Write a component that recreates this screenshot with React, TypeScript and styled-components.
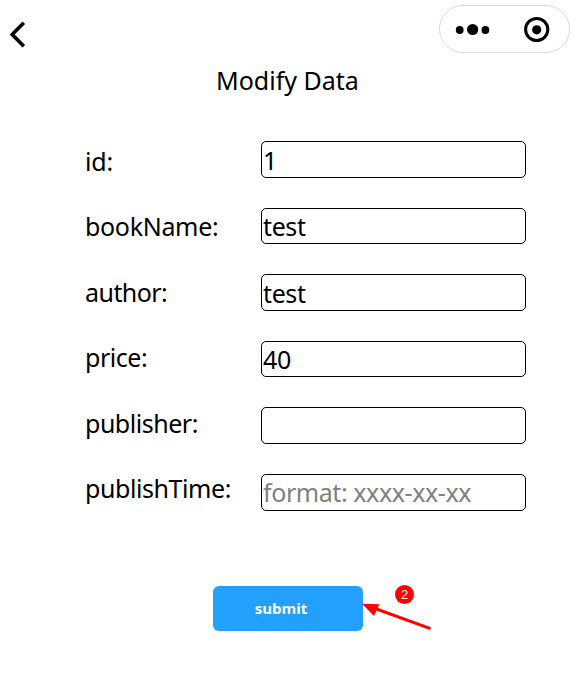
import React from "react";
import styled, { createGlobalStyle } from "styled-components";

const GlobalStyle = createGlobalStyle`
  *, *::before, *::after { box-sizing: border-box; }
  body {
    margin: 0;
    background: #fff;
    color: #000;
    font-family: "Segoe UI", "Noto Sans", sans-serif;
    font-size: 25px;
  }
`;

const Page = styled.main`
  width: 574px;
  height: 683px;
  overflow: hidden;
`;

const TopBar = styled.header`
  display: flex;
  justify-content: space-between;
  height: 58px;
  padding: 5px 4px 0 8px;
`;

const BackButton = styled.button`
  width: 20px;
  height: 30px;
  margin-top: 15px;
  padding: 0;
  border: 0;
  background: none;
  svg { display: block; }
`;

const Capsule = styled.div`
  width: 131px;
  height: 48px;
  border: 1px solid #dcdcdc;
  border-radius: 24px;
  svg { display: block; }
`;

const Title = styled.h1`
  margin: 0;
  height: 83.27px;
  padding-left: 216px;
  font-size: 25px;
  font-weight: 400;
  line-height: 45px;
  white-space: nowrap;
`;

const Form = styled.form`
  display: grid;
  grid-template-columns: 176px 265px;
  align-items: start;
  padding-left: 85px;
`;

const Labels = styled.div`
  display: flex;
  flex-direction: column;
  gap: 29.4px;
  margin-top: -0.27px;
`;

const Label = styled.label<{ $tracking: number }>`
  height: 36px;
  line-height: 40px;
  white-space: nowrap;
  letter-spacing: ${(p) => p.$tracking}px;
`;

const Fields = styled.div`
  display: flex;
  flex-direction: column;
  gap: 29.95px;
`;

const Input = styled.input<{ $tracking: number }>`
  width: 265px;
  height: 36.6px;
  padding: 0 0 0 1px;
  border: 1px solid #000;
  border-radius: 5px;
  background: #fff;
  color: #000;
  font: inherit;
  letter-spacing: ${(p) => p.$tracking}px;
  outline: none;
  &::placeholder { color: #808080; opacity: 1; }
`;

const Actions = styled.div`
  display: flex;
  grid-column: 1 / -1;
  margin: 75.3px 0 0 128px;
`;

const Submit = styled.button`
  width: 150px;
  height: 45px;
  padding: 0 14px 0 0;
  border: 0;
  border-radius: 6px;
  background: #22a0fc;
  color: #fff;
  font-family: "Segoe UI", "Open Sans", sans-serif;
  font-size: 15px;
  font-weight: 700;
  line-height: 45px;
`;

const Callout = styled.div`
  position: relative;
  width: 70px;
  height: 45px;
  svg { display: block; overflow: visible; }
`;

const Step = styled.span`
  position: absolute;
  left: 32px;
  top: -1px;
  width: 19px;
  height: 19px;
  border-radius: 50%;
  background: #f00;
  color: #fff;
  font: 13px/19px "Liberation Sans", sans-serif;
  text-align: center;
`;

const fields = [
  { name: "id", value: "1", tracking: -0.2, valueTracking: 0 },
  { name: "bookName", value: "test", tracking: -0.32, valueTracking: -0.4 },
  { name: "author", value: "test", tracking: -0.55, valueTracking: -0.4 },
  { name: "price", value: "40", tracking: -0.45, valueTracking: -0.2 },
  { name: "publisher", value: "", tracking: -0.48, valueTracking: 0 },
  { name: "publishTime", value: "", placeholder: "format: xxxx-xx-xx", tracking: -0.42, valueTracking: -0.42 },
];

export default function App() {
  return (
    <Page>
      <GlobalStyle />
      <TopBar>
        <BackButton aria-label="Back">
          <svg width="20" height="30" viewBox="0 0 20 30" fill="none" stroke="#000" strokeWidth="3.6">
            <path d="M15.8 2.8 4.2 14.5l11.6 11.7" />
          </svg>
        </BackButton>
        <Capsule>
          <svg width="129" height="46" viewBox="0 0 129 46">
            <circle cx="19.7" cy="24" r="3.9" />
            <circle cx="32.6" cy="23.5" r="5.6" />
            <circle cx="45.4" cy="24" r="3.9" />
            <circle cx="96.7" cy="23.5" r="11.1" fill="none" stroke="#000" strokeWidth="3" />
            <circle cx="96.7" cy="23.8" r="4.6" />
          </svg>
        </Capsule>
      </TopBar>
      <Title>Modify Data</Title>
      <Form onSubmit={(e) => e.preventDefault()}>
        <Labels>
          {fields.map((f) => (
            <Label key={f.name} htmlFor={f.name} $tracking={f.tracking}>
              {f.name}:
            </Label>
          ))}
        </Labels>
        <Fields>
          {fields.map((f) => (
            <Input
              key={f.name}
              id={f.name}
              defaultValue={f.value}
              placeholder={f.placeholder}
              $tracking={f.valueTracking}
            />
          ))}
        </Fields>
        <Actions>
          <Submit type="submit">submit</Submit>
          <Callout>
            <svg width="70" height="45" viewBox="0 0 70 45">
              <path d="M12 22.5 67.5 42.7" stroke="#f00" strokeWidth="3" />
              <path d="M-1 17.8 16.3 18.2 11 30z" fill="#f00" />
            </svg>
            <Step>2</Step>
          </Callout>
        </Actions>
      </Form>
    </Page>
  );
}
